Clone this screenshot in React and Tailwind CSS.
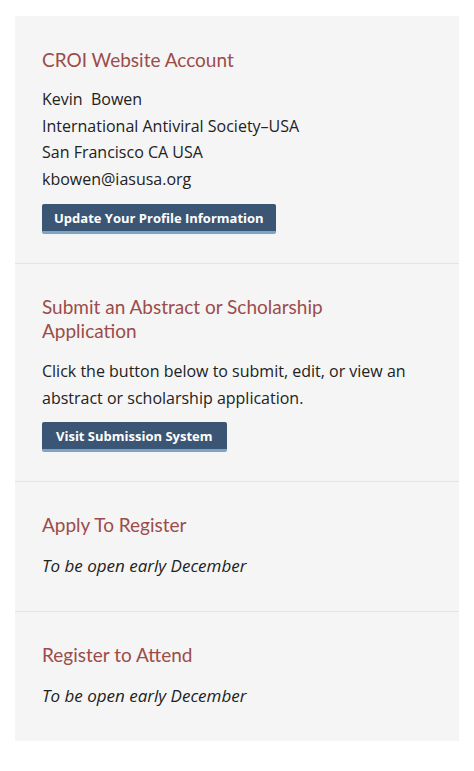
export default function App() {
  const heading = "text-[19px] text-[#9c4c4a] font-['Lato',sans-serif] font-normal";
  const body = "text-[16px] leading-[26.5px] text-[#222] font-['Open_Sans',sans-serif]";
  const note = "text-[17px] leading-[26px] text-[#222] font-['Open_Sans',sans-serif] italic";
  const button =
    "inline-block bg-[#3b5674] text-white text-[13px] font-bold font-['Open_Sans',sans-serif] px-[12px] h-[30px] leading-[28px] rounded-[2px] border-b-[3px] border-[#7fa3c3]";

  return (
    <div className="min-h-screen bg-white pt-4 pl-[15px]">
      <div className="w-[444px] bg-[#f5f5f5]">
        <section className="px-[27px] pt-[31px] pb-[29px] border-b border-[#e4e4e4]">
          <h2 className={`${heading} leading-[26px]`}>CROI Website Account</h2>
          <div className={`${body} mt-[13px]`}>
            <p>Kevin&nbsp; Bowen</p>
            <p>International Antiviral Society–USA</p>
            <p>San Francisco CA USA</p>
            <p>kbowen@iasusa.org</p>
          </div>
          <div className="mt-[12px]">
            <span className={button}>Update Your Profile Information</span>
          </div>
        </section>

        <section className="px-[27px] pt-[31px] pb-[29px] border-b border-[#e4e4e4]">
          <h2 className={`${heading} leading-[24px] max-w-[320px]`}>
            Submit an Abstract or Scholarship Application
          </h2>
          <p className={`${body} mt-[15px]`}>
            Click the button below to submit, edit, or view an abstract or scholarship application.
          </p>
          <div className="mt-[11px]">
            <span className={`${button} px-[14px]`}>Visit Submission System</span>
          </div>
        </section>

        <section className="px-[27px] pt-[30px] pb-[32px] border-b border-[#e4e4e4]">
          <h2 className={`${heading} leading-[26px]`}>Apply To Register</h2>
          <p className={`${note} mt-[15px]`}>To be open early December</p>
        </section>

        <section className="px-[27px] pt-[30px] pb-[32px]">
          <h2 className={`${heading} leading-[26px]`}>Register to Attend</h2>
          <p className={`${note} mt-[15px]`}>To be open early December</p>
        </section>
      </div>
    </div>
  );
}
